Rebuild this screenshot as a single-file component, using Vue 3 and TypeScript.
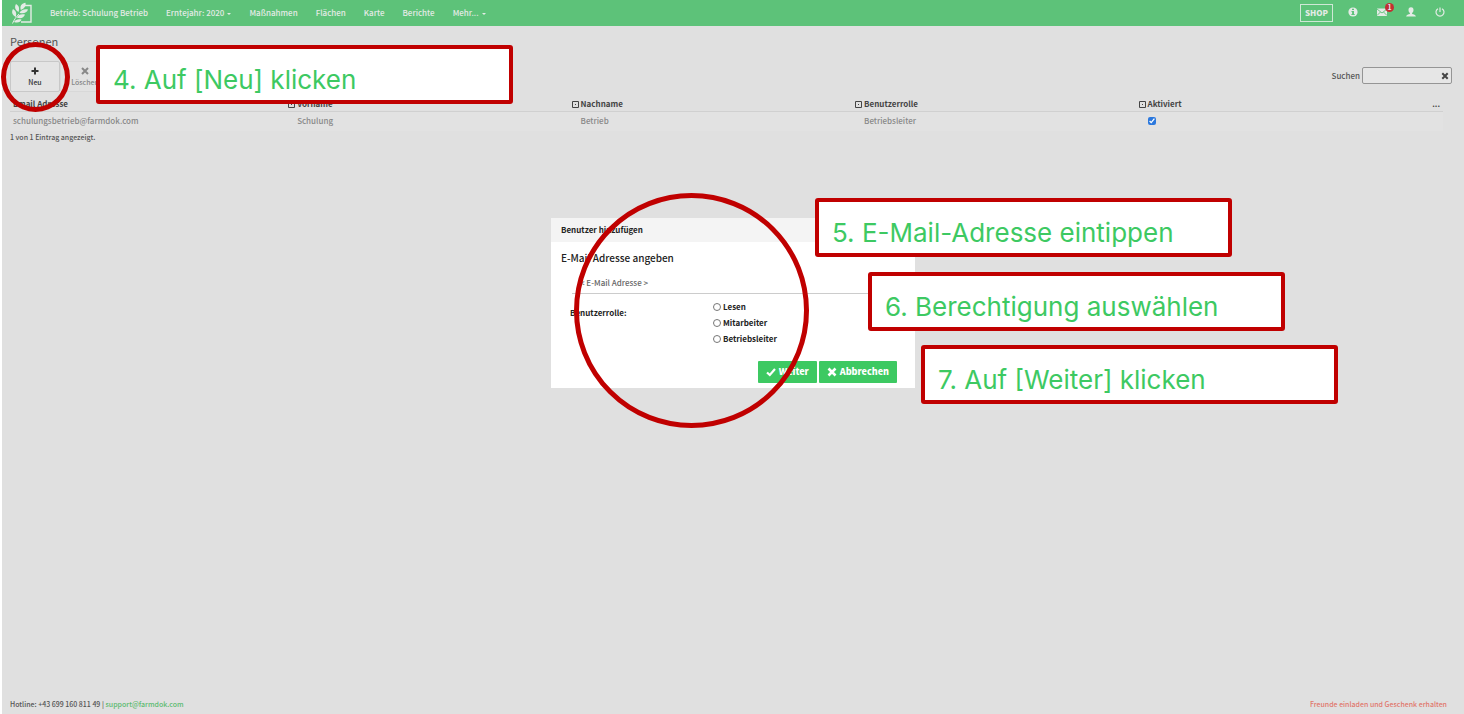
<script setup lang="ts">
import { ref } from 'vue'

interface NavItem {
  label: string
  caret?: boolean
}

interface Person {
  email: string
  vorname: string
  nachname: string
  rolle: string
  aktiviert: boolean
}

const navItems: NavItem[] = [
  { label: 'Betrieb: Schulung Betrieb' },
  { label: 'Erntejahr: 2020', caret: true },
  { label: 'Maßnahmen' },
  { label: 'Flächen' },
  { label: 'Karte' },
  { label: 'Berichte' },
  { label: 'Mehr...', caret: true },
]

const sortableColumns: string[] = ['Vorname', 'Nachname', 'Benutzerrolle', 'Aktiviert']

const people = ref<Person[]>([
  {
    email: 'schulungsbetrieb@farmdok.com',
    vorname: 'Schulung',
    nachname: 'Betrieb',
    rolle: 'Betriebsleiter',
    aktiviert: true,
  },
])

const roles: string[] = ['Lesen', 'Mitarbeiter', 'Betriebsleiter']
const selectedRole = ref('')
const newEmail = ref('')
const search = ref('')
</script>

<template>
  <div class="page">
    <header class="topbar">
      <a class="logo" href="#" aria-label="Startseite">
        <svg viewBox="0 0 22 22" width="22" height="22">
          <path d="M14 3.500H20V20H10" fill="none" stroke="currentColor" stroke-width="1.400" />
          <path d="M1.500 21.500C3 18 5 15 8 12" fill="none" stroke="currentColor" stroke-width="1" />
          <g fill="currentColor">
            <path d="M9.500 6.500C9 3.500 11 1.500 14.500 0.800C15.200 4 13.500 6.500 9.800 8Z" />
            <path d="M6.800 9.500C3.800 7.500 3.500 4.500 5 2C8 3.500 8.800 6.500 7.500 10Z" />
            <path d="M4 14.500C0.800 12.500 0.500 9.500 2 7C5 8.500 5.800 11.500 4.800 15Z" />
            <path d="M8.500 10.800C10 8 13 6.800 17 7.500C15.800 10.800 12.500 12.200 8.500 10.800Z" />
            <path d="M5.800 15.500C7.300 12.700 10 11.800 14 12.500C12.800 15.800 9.800 17 5.800 15.500Z" />
            <path d="M3 20C4.500 17.500 7 16.700 10.500 17.500C9.500 20.300 6.800 21.300 3 20Z" />
          </g>
        </svg>
      </a>
      <nav class="nav">
        <a v-for="item in navItems" :key="item.label" href="#">
          {{ item.label }}<span v-if="item.caret" class="caret"></span>
        </a>
      </nav>
      <div class="actions">
        <a class="shop" href="#">SHOP</a>
        <a class="action" href="#" aria-label="Information">
          <svg viewBox="0 0 10 10" width="10" height="10">
            <circle cx="5" cy="5" r="4.600" fill="currentColor" />
            <path d="M4 1.700H6V3.100H4ZM3.500 4H6V7H6.700V8H3.400V7H4.100V5H3.500Z" fill="#5dc279" />
          </svg>
        </a>
        <a class="action" href="#" aria-label="Nachrichten">
          <svg viewBox="0 0 10 10" width="10" height="10">
            <path d="M0 1.500H10V9H0Z" fill="currentColor" />
            <path d="M0 2L5 6L10 2M0 8.500L3.500 5M10 8.500L6.500 5" fill="none" stroke="#5dc279" stroke-width="0.900" />
          </svg>
          <span class="badge">1</span>
        </a>
        <a class="action" href="#" aria-label="Profil">
          <svg viewBox="0 0 10 10" width="10" height="10">
            <path d="M5 0.300C3.200 0.300 2.400 1.600 2.500 3.200C2.600 4.500 3.200 5.400 3.900 6V7C2.400 7.500 0.300 7.800 0.100 9.500H9.900C9.700 7.800 7.600 7.500 6.100 7V6C6.800 5.400 7.400 4.500 7.500 3.200C7.600 1.600 6.800 0.300 5 0.300Z" fill="currentColor" />
          </svg>
        </a>
        <a class="action" href="#" aria-label="Abmelden">
          <svg viewBox="0 0 10 10" width="10" height="10">
            <path d="M3 1.700A4 4 0 1 0 7 1.700M5 0.500V5" fill="none" stroke="currentColor" stroke-width="1.200" />
          </svg>
        </a>
      </div>
    </header>

    <main class="content">
      <h1>Personen</h1>
      <div class="toolbar">
        <div class="tool-anchor">
          <button class="tool tool-new" type="button">
            <svg viewBox="0 0 8 8" width="8" height="8">
              <path d="M4 0.500V7.500M0.500 4H7.500" stroke="currentColor" stroke-width="2" />
            </svg>
            Neu
          </button>
          <div class="ring ring-small"></div>
          <div class="callout callout-new">4. Auf [Neu] klicken</div>
        </div>
        <button class="tool" type="button">
          <svg viewBox="0 0 8 8" width="8" height="8">
            <path d="M1 1L7 7M7 1L1 7" stroke="currentColor" stroke-width="2" />
          </svg>
          Löschen
        </button>
        <div class="search">
          <label for="search">Suchen</label>
          <div class="search-box">
            <input id="search" v-model="search" type="text" />
            <button type="button" aria-label="Suche leeren" @click="search = ''">
              <svg viewBox="0 0 8 8" width="8" height="8">
                <path d="M1.300 1.300L6.700 6.700M6.700 1.300L1.300 6.700" stroke="currentColor" stroke-width="2" />
              </svg>
            </button>
          </div>
        </div>
      </div>

      <table class="people">
        <thead>
          <tr>
            <th class="col-mail">Email Adresse</th>
            <th v-for="column in sortableColumns" :key="column">
              <svg class="sort" viewBox="0 0 7 7" width="7" height="7">
                <path d="M0.500 0.500H6.500V6.500H0.500Z" fill="none" stroke="currentColor" />
                <path d="M3 3H4V4H3Z" fill="currentColor" />
              </svg>{{ column }}
            </th>
            <th class="col-more">...</th>
          </tr>
        </thead>
        <tbody>
          <tr v-for="person in people" :key="person.email">
            <td class="col-mail">{{ person.email }}</td>
            <td>{{ person.vorname }}</td>
            <td>{{ person.nachname }}</td>
            <td>{{ person.rolle }}</td>
            <td>
              <input v-model="person.aktiviert" class="check" type="checkbox" aria-label="Aktiviert" />
            </td>
            <td></td>
          </tr>
        </tbody>
      </table>
      <p class="count">1 von 1 Eintrag angezeigt.</p>
    </main>

    <footer class="footer">
      <span>Hotline: +43 699 160 811 49 | <a href="#">support@farmdok.com</a></span>
      <a class="invite" href="#">Freunde einladen und Geschenk erhalten</a>
    </footer>

    <div class="overlay">
      <div class="dialog-anchor">
        <form class="dialog" role="dialog" aria-labelledby="dialog-title" @submit.prevent>
          <h2 id="dialog-title">Benutzer hinzufügen</h2>
          <div class="dialog-body">
            <label class="mail-label" for="new-mail">E-Mail Adresse angeben</label>
            <input id="new-mail" v-model="newEmail" class="mail" type="text" placeholder="&lt; E-Mail Adresse &gt;" />
            <div class="role-row" role="radiogroup" aria-labelledby="role-label">
              <span id="role-label" class="role-label">Benutzerrolle:</span>
              <div class="roles">
                <label v-for="role in roles" :key="role">
                  <input v-model="selectedRole" type="radio" name="role" :value="role" />{{ role }}
                </label>
              </div>
            </div>
            <div class="buttons">
              <button type="submit">
                <svg viewBox="0 0 10 10" width="10" height="10">
                  <path d="M1 5.500L3.800 8L9 2" fill="none" stroke="currentColor" stroke-width="2.200" />
                </svg>
                Weiter
              </button>
              <button type="button">
                <svg viewBox="0 0 10 10" width="10" height="10">
                  <path d="M1.500 1.500L8.500 8.500M8.500 1.500L1.500 8.500" stroke="currentColor" stroke-width="2.600" />
                </svg>
                Abbrechen
              </button>
            </div>
          </div>
        </form>
        <div class="ring ring-large"></div>
        <div class="callout callout-mail">5. E-Mail-Adresse eintippen</div>
        <div class="callout callout-role">6. Berechtigung auswählen</div>
        <div class="callout callout-next">7. Auf [Weiter] klicken</div>
      </div>
    </div>
  </div>
</template>

<style>
body {
  margin: 0;
  background: #fff;
}
</style>

<style scoped>
.page {
  position: relative;
  box-sizing: border-box;
  display: flex;
  flex-direction: column;
  min-height: 100vh;
  margin-left: 2px;
  background: #e0e0e0;
  color: #555;
  font-family: "Noto Sans CJK SC", "Noto Sans", sans-serif;
  font-size: 8px;
  font-weight: 500;
  line-height: 12px;
}

a {
  color: inherit;
  text-decoration: none;
}

button,
input {
  font: inherit;
  color: inherit;
}

svg {
  display: block;
  flex: none;
}

.topbar {
  display: flex;
  align-items: center;
  height: 26px;
  padding: 0 19px 0 9px;
  background: #5dc279;
  color: #e4ebe6;
}

.logo {
  margin-right: 17px;
}

.nav {
  display: flex;
  gap: 18px;
  white-space: nowrap;
}

.caret {
  display: inline-block;
  margin-left: 3px;
  border: 2px solid transparent;
  border-top-color: currentColor;
  border-bottom: 0;
  vertical-align: middle;
}

.actions {
  display: flex;
  align-items: center;
  gap: 19px;
  margin-left: auto;
}

.shop {
  box-sizing: border-box;
  width: 33px;
  height: 18px;
  margin-right: -4px;
  border: 1px solid #cfe8d6;
  font-weight: 900;
  line-height: 16px;
  text-align: center;
}

.action {
  position: relative;
  bottom: 1px;
}

.badge {
  position: absolute;
  top: -4px;
  left: 8px;
  width: 9px;
  height: 9px;
  border-radius: 50%;
  background: #c22f33;
  color: #e8e8e8;
  font-size: 7px;
  font-weight: 700;
  line-height: 9px;
  text-align: center;
}

.content {
  flex: 1;
  padding: 7px 12px 0 8px;
}

h1 {
  margin: 0;
  font-size: 11px;
  font-weight: 400;
  line-height: 16px;
}

.toolbar {
  display: flex;
  align-items: flex-start;
  margin-top: 12px;
}

.tool-anchor {
  position: relative;
}

.tool {
  box-sizing: border-box;
  display: flex;
  flex-direction: column;
  align-items: center;
  gap: 1px;
  width: 50px;
  height: 31px;
  padding: 5px 0 0;
  border: 1px solid #d8d8d8;
  border-radius: 2px;
  background: #e2e2e2;
  color: #888;
  font-size: 7px;
}

.tool-new {
  border-color: #c8c8c8;
  background: #e4e4e4;
  color: #333;
}

.search {
  display: flex;
  align-items: center;
  gap: 2px;
  margin: 6px 0 0 auto;
}

.search-box {
  box-sizing: border-box;
  display: flex;
  align-items: center;
  width: 90px;
  height: 17px;
  border: 1px solid #959595;
  border-radius: 2px;
  background: #e6e6e6;
}

.search-box input {
  flex: 1;
  min-width: 0;
  padding: 0 4px;
  border: 0;
  outline: 0;
  background: none;
}

.search-box button {
  padding: 0 2px;
  border: 0;
  background: none;
  color: #444;
}

.people {
  width: calc(100% - 9px);
  margin-top: 3px;
  border-collapse: collapse;
  table-layout: fixed;
}

.people th,
.people td {
  padding: 0 0 0 9px;
  text-align: left;
  white-space: nowrap;
}

.people th {
  height: 14px;
  padding-top: 2px;
  border-bottom: 1px solid #d0d0d0;
  color: #444;
  line-height: 14px;
}

.people td {
  height: 17px;
  padding-bottom: 2px;
  background: #e2e2e2;
  color: #888;
}

.people th.col-mail,
.people td.col-mail {
  width: 19.2%;
  padding-left: 3px;
}

.people th.col-more {
  width: 18px;
  padding-right: 3px;
  padding-left: 0;
  text-align: right;
}

.sort {
  display: inline-block;
  margin: 0 2px 0 -9px;
  vertical-align: -1px;
}

.check {
  display: block;
  width: 8px;
  height: 8px;
  margin: 0;
  accent-color: #2b78dd;
}

.count {
  margin: 0;
  font-size: 7px;
}

.footer {
  display: flex;
  justify-content: space-between;
  padding: 0 17px 4px 8px;
  font-size: 7px;
}

.footer a {
  color: #5dbb70;
}

.footer .invite {
  color: #e0776c;
}

.overlay {
  position: absolute;
  inset: 0;
  display: flex;
  align-items: flex-start;
  justify-content: center;
  padding-top: 218px;
  pointer-events: none;
}

.dialog-anchor {
  position: relative;
  width: 364px;
  pointer-events: auto;
}

.dialog {
  background: #fff;
  color: #222;
}

.dialog h2 {
  margin: 0;
  padding: 0 10px;
  background: #f4f4f4;
  font-size: 8px;
  line-height: 24px;
}

.dialog-body {
  padding: 8px 18px 5px 10px;
}

.mail-label {
  display: block;
  font-size: 10px;
  line-height: 16px;
}

.mail {
  display: block;
  box-sizing: border-box;
  width: calc(100% - 12px);
  height: 22px;
  margin: 6px 0 0 11px;
  padding: 0 8px;
  border: 0;
  border-bottom: 1px solid #ccc;
  outline: 0;
  background: none;
}

.mail::placeholder {
  color: #666;
  opacity: 1;
}

.role-row {
  display: grid;
  grid-template-columns: 143px 1fr;
  margin: 5px 0 0 9px;
  font-weight: 700;
}

.role-label {
  line-height: 28px;
}

.roles {
  display: flex;
  flex-direction: column;
}

.roles label {
  display: flex;
  align-items: center;
  gap: 2px;
  line-height: 16px;
}

.roles input {
  width: 8px;
  height: 8px;
  margin: 0;
}

.buttons {
  display: flex;
  justify-content: flex-end;
  gap: 2px;
  margin-top: 14px;
}

.buttons button {
  display: flex;
  align-items: center;
  gap: 3px;
  height: 22px;
  padding: 0 8px;
  border: 0;
  border-radius: 1px;
  background: #3dc962;
  color: #fff;
  font-size: 9px;
  font-weight: 900;
}

.ring {
  position: absolute;
  box-sizing: border-box;
  border: 5px solid #c00000;
  border-radius: 50%;
  pointer-events: none;
}

.ring-small {
  top: -19px;
  left: -9px;
  width: 69px;
  height: 70px;
}

.ring-large {
  top: -25px;
  left: 23px;
  width: 235px;
  height: 235px;
}

.callout {
  position: absolute;
  z-index: 1;
  box-sizing: border-box;
  width: 417px;
  padding: 15px 13px 4px;
  border: 4px solid #c00000;
  border-radius: 3px;
  background: #fff;
  color: #3dc962;
  font-family: Inter, sans-serif;
  font-size: 26px;
  font-weight: 400;
  line-height: 32px;
  white-space: nowrap;
}

.callout-new {
  top: -16px;
  left: 86px;
}

.callout-mail {
  top: -20px;
  left: 264px;
}

.callout-role {
  top: 54px;
  left: 317px;
}

.callout-next {
  top: 127px;
  left: 370px;
}
</style>
